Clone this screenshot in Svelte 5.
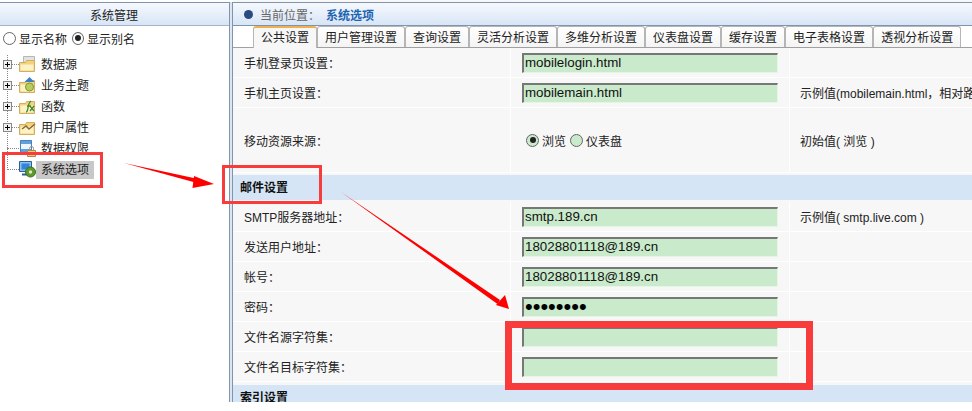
<script>
  const tree = [
    { label: '数据源', icon: 'source', plus: true },
    { label: '业务主题', icon: 'subject', plus: true },
    { label: '函数', icon: 'fx', plus: true },
    { label: '用户属性', icon: 'attr', plus: true },
    { label: '数据权限', icon: 'perm', plus: false },
    { label: '系统选项', icon: 'opt', plus: false, active: true },
  ];
  const tabs = ['公共设置', '用户管理设置', '查询设置', '灵活分析设置', '多维分析设置', '仪表盘设置', '缓存设置', '电子表格设置', '透视分析设置'];
  const mailRows = [
    { label: 'SMTP服务器地址：', value: 'smtp.189.cn', note: '示例值( smtp.live.com )' },
    { label: '发送用户地址：', value: '18028801118@189.cn' },
    { label: '帐号：', value: '18028801118@189.cn' },
    { label: '密码：', value: '••••••••', secret: true },
    { label: '文件名源字符集：', value: '' },
    { label: '文件名目标字符集：', value: '' },
  ];
</script>

{#snippet folder()}
  <path d="M.5 5.5h6l1-2h8v12H.5z" fill="#f3d27a" stroke="#d0ae62" />
  <path d="M1.5 7.5h13v7h-13z" fill="#fdf2c6" />
{/snippet}

<div class="page">
  <aside class="side">
    <div class="side-head">系统管理</div>
    <div class="mode">
      <span class="radio"></span><span class="mode-text">显示名称</span>
      <span class="radio on"></span><span class="mode-text">显示别名</span>
    </div>
    <ul class="tree">
      {#each tree as node}
        <li class="node" class:active={node.active}>
          {#if node.plus}<span class="plus"></span><span class="stub"></span>{:else}<span class="elbow"></span>{/if}
          <svg class="ico" width="17" height="17" viewBox="0 0 17 17">
            {#if node.icon === 'source'}
              <path d="M4.5 .5h11v7h-11z" fill="#e2e2e2" stroke="#b5b5b5" />
              <path d="M.5 6.5h6l1-2h8v11H.5z" fill="#f3d27a" stroke="#d0ae62" />
              <path d="M1.5 8.5h13v6h-13z" fill="#fdf2c6" />
            {:else if node.icon === 'subject'}
              {@render folder()}
              <path d="M10.5 0l5 5h-10z" fill="#3f7fc4" />
              <circle cx="10.5" cy="10" r="4" fill="#b9cc62" stroke="#7f9a35" />
            {:else if node.icon === 'fx'}
              {@render folder()}
              <path d="M7 14c3 0 1-9 5-11M8 8h4M11 8l4 5M15 8l-4 5" fill="none" stroke="#3d8a2a" stroke-width="1.3" />
            {:else if node.icon === 'attr'}
              {@render folder()}
              <path d="M3 10l4-3 3 3 6-5" fill="none" stroke="#8a6a35" stroke-width="1.5" />
            {:else if node.icon === 'perm'}
              <path d="M1.5 .5h11v14h-11z" fill="#5f9fde" stroke="#4a80b5" />
              <path d="M2 4h10v5H2z" fill="#eef4fb" />
              <path d="M8.5 10.5h8v6h-8z" fill="#e9c97a" stroke="#a98a45" />
              <path d="M10.5 10V8.500a2 2 0 0 1 4 0V10" fill="none" stroke="#999" />
            {:else}
              <path d="M.5 .5h12v10H.5z" fill="#8fc0ee" stroke="#2c5f97" />
              <path d="M2.500 2.500h8v6h-8z" fill="#2f86dc" />
              <path d="M3 12.500h8v2H3z" fill="#2c5f97" />
              <circle cx="11.500" cy="11" r="5" fill="#5c9a30" stroke="#3c6e1a" />
              <circle cx="11.500" cy="11" r="1.700" fill="#dcebb5" />
            {/if}
          </svg>
          <span class="node-label">{node.label}</span>
        </li>
      {/each}
    </ul>
  </aside>

  <div class="split"></div>

  <main class="main">
    <div class="crumb">
      <span class="dot"></span>
      <span class="crumb-key">当前位置：</span>
      <span class="crumb-val">系统选项</span>
    </div>
    <div class="tabs">
      {#each tabs as tab, i}
        <div class="tab" class:current={i === 0}>{tab}</div>
      {/each}
    </div>
    <div class="form">
      <div class="row">
        <div class="cell label">手机登录页设置：</div>
        <div class="cell"><div class="field">mobilelogin.html</div></div>
        <div class="cell note"></div>
      </div>
      <div class="row">
        <div class="cell label">手机主页设置：</div>
        <div class="cell"><div class="field">mobilemain.html</div></div>
        <div class="cell note">示例值(mobilemain.html，相对路径)</div>
      </div>
      <div class="row tall">
        <div class="cell label">移动资源来源：</div>
        <div class="cell choice">
          <span class="radio on green"></span><span>浏览</span>
          <span class="radio green"></span><span>仪表盘</span>
        </div>
        <div class="cell note">初始值( 浏览 )</div>
      </div>
      <div class="section">邮件设置</div>
      {#each mailRows as r}
        <div class="row">
          <div class="cell label">{r.label}</div>
          <div class="cell"><div class="field" class:secret={r.secret}>{r.value}</div></div>
          <div class="cell note">{r.note ?? ''}</div>
        </div>
      {/each}
      <div class="section last">索引设置</div>
    </div>
  </main>

  <!-- annotations drawn over the screenshot -->
  <svg class="marks" width="972" height="411" viewBox="0 0 972 411">
    <rect x="3.500" y="153.500" width="98" height="33" fill="none" stroke="#f83c3c" stroke-width="3" />
    <rect x="223.500" y="166.500" width="97" height="36" fill="none" stroke="#f83c3c" stroke-width="3" />
    <rect x="508.500" y="324.500" width="301" height="62" fill="none" stroke="#f83c3c" stroke-width="7" />
    <path d="M124 163l72 15.500-.8 4z" fill="#f00" />
    <path d="M214 184l-20-8-1.500 12z" fill="#f00" />
    <path d="M341 192l159 108-2.500 4z" fill="#f00" />
    <path d="M509 309l-4-14-9 10z" fill="#f00" />
  </svg>
</div>

<style>
  :global(body) { margin: 0; background: #fff; }
  .page {
    position: relative;
    display: flex;
    width: 972px; height: 402px;
    overflow: hidden;
    background: #fff;
    font-family: "Liberation Sans", "Noto Sans CJK SC", sans-serif;
    font-size: 12px; color: #222;
  }
  .side { width: 229px; flex: none; }
  .side-head {
    height: 22px; line-height: 26px;
    margin-top: 2px;
    padding-right: 1px;
    text-align: center;
    background: linear-gradient(#f6f9fe, #d8e5f6);
    border-top: 1px solid #7f95ae;
    border-bottom: 1px solid #a3b5ca;
  }
  .mode { display: flex; align-items: center; height: 24px; padding-left: 3px; }
  .mode-text { margin-left: 3px; margin-right: 5px; }
  .mode .radio.on { width: 10px; }
  .mode .radio.on + .mode-text { margin-left: 3px; }
  .radio {
    display: inline-block;
    flex: none;
    width: 11px; height: 11px;
    border: 1px solid #666; border-radius: 50%;
    background: #fff;
    position: relative;
  }
  .radio.on::after {
    content: ''; position: absolute;
    left: 50%; top: 50%;
    width: 6px; height: 6px; border-radius: 50%;
    transform: translate(-50%, -50%);
    background: #222;
  }
  .radio.green { background: #c9eacb; }
  .tree { position: relative; list-style: none; margin: 4px 0 0; padding: 0 0 0 3px; }
  .tree::before {
    content: ''; position: absolute;
    left: 7px; top: 1px;
    height: 115px;
    border-left: 1px dotted #888;
  }
  .node { display: flex; align-items: center; height: 21px; }
  .plus {
    position: relative;
    flex: none;
    width: 7px; height: 7px;
    border: 1px solid #888;
    background:
      linear-gradient(#000, #000) center / 5px 1px no-repeat,
      linear-gradient(#000, #000) center / 1px 5px no-repeat,
      #f2f2f2;
  }
  .stub { width: 7px; border-bottom: 1px dotted #888; }
  .elbow { width: 12px; margin-left: 4px; border-bottom: 1px dotted #888; }
  .ico { flex: none; }
  .node-label { padding: 0 5px; line-height: 18px; white-space: nowrap; }
  .node.active .node-label { background: #c8c8c8; }
  .split {
    width: 4px; flex: none;
    margin-top: 2px;
    background: #dde6f0;
    border-left: 1px solid #7f95ae;
    border-right: 1px solid #7f95ae;
    box-sizing: border-box;
  }
  .main { flex: 1; min-width: 0; background: #f7f7f7; }
  .crumb {
    display: flex; align-items: center;
    height: 22px; margin-top: 2px;
    padding-left: 11px;
    background: linear-gradient(#f6f9fe, #d8e5f6);
    border-top: 1px solid #7f95ae;
    border-bottom: 1px solid #7f95ae;
    color: #666;
  }
  .dot { width: 9px; height: 9px; border-radius: 50%; background: #2b4a80; margin-right: 7px; }
  .crumb-val { margin-left: 6px; color: #1c64b0; font-weight: 700; }
  .tabs {
    display: flex; gap: 1px;
    height: 21px;
    padding-left: 21px;
    background: #fff;
    border-bottom: 1px solid #a0a0a0;
  }
  .tab {
    padding: 0 7px;
    line-height: 22px;
    background: linear-gradient(#fff, #f4f4f4);
    border: 1px solid #b5b5b5; border-bottom: none;
    border-radius: 3px 3px 0 0;
    margin-left: -1px;
    white-space: nowrap;
  }
  .tab.current {
    background: #f7f7f7;
    border-top: 2px solid #f0b050;
    height: 20px;
    line-height: 20px;
  }
  .row {
    display: grid;
    grid-template-columns: 278px 279px 1fr;
    height: 30px;
    border-bottom: 1px solid #fff;
    box-sizing: border-box;
  }
  .row.tall { height: 65px; }
  .cell { display: flex; align-items: center; white-space: nowrap; overflow: hidden; border-right: 1px solid #fff; }
  .label { padding-left: 11px; }
  .cell:nth-child(2) { padding-left: 11px; }
  .note { padding-left: 10px; border-right: none; }
  .field {
    box-sizing: border-box;
    width: 256px; height: 20px;
    padding-left: 1px;
    background: #c9eacb;
    border-style: solid;
    border-color: #777 #e6f5e6 #e6f5e6 #777;
    border-width: 2px 1px 1px 2px;
    font: 13.33px/16px "Liberation Sans", sans-serif;
    color: #111;
  }
  .field.secret { font-size: 22px; line-height: 16px; color: #000; }
  .choice { padding-left: 15px !important; }
  .choice span:not(.radio) { margin: 0 4px 0 3px; }
  .section {
    height: 25px; line-height: 27px;
    margin: 2px 0;
    padding-left: 7px;
    background: #d5e5f6;
    font-weight: 700; color: #111;
  }
  .section.last { height: 17px; margin: 3px 0 0; }
  .marks { position: absolute; left: 0; top: 0; pointer-events: none; }
</style>
